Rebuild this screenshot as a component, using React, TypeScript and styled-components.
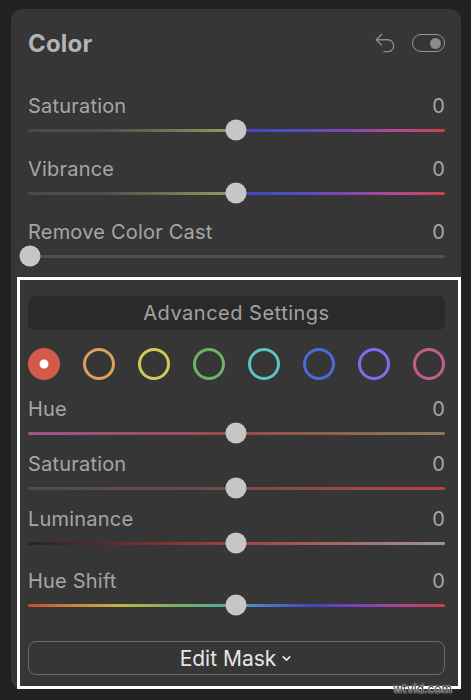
import { FC } from 'react';
import styled, { createGlobalStyle } from 'styled-components';
import { Undo2, ChevronDown } from 'lucide-react';

const GlobalStyle = createGlobalStyle`
	html, body {
		margin: 0;
		padding: 0;
		background: #222222;
		height: 700px;
		overflow: hidden;
	}
	body {
		font-family: Inter, "Noto Sans", "Liberation Sans", sans-serif;
	}
`

interface ISliderProps {
	label: string;
	value: number;
	gradient: string;
	pos: number;
	gapTop?: number;
}

const Slider: FC<ISliderProps> = ({label, value, gradient, pos, gapTop = 0}) => {
	return (
		<SliderRow $gapTop={gapTop}>
			<LabelLine>
				<span>{label}</span>
				<span>{value}</span>
			</LabelLine>
			<TrackArea>
				<Track $gradient={gradient}/>
				<Knob $pos={pos}/>
			</TrackArea>
		</SliderRow>
	);
};

const swatches = ['#d25a4a', '#dca05e', '#cfc95a', '#6cb463', '#5cc2c2', '#4d6ad6', '#8a68ee', '#bf5f8e'];

const colorGradient = 'linear-gradient(to right, #4a4a4a 0%, #4e4e4e 18%, #6e7656 34%, #8d9b5f 48%, #4646c0 52%, #4b4ec6 62%, #8246b2 76%, #b04a94 88%, #c84444 100%)';

const App: FC = () => {
	return (
		<Page>
			<GlobalStyle/>
			<Panel>
				<Header>
					<Title>Color</Title>
					<HeaderIcons>
						<Undo2 size={26} strokeWidth={1.2} color="#8c8c8c"/>
						<Toggle><ToggleDot/></Toggle>
					</HeaderIcons>
				</Header>
				<Rows $gap={15}>
					<Slider label="Saturation" value={0} pos={0.498} gradient={colorGradient}/>
					<Slider label="Vibrance" value={0} pos={0.498} gradient={colorGradient}/>
					<Slider label="Remove Color Cast" value={0} pos={0.005} gradient="#505050"/>
				</Rows>
				<Highlight>
					<AdvancedButton>Advanced Settings</AdvancedButton>
					<SwatchRow>
						{swatches.map((c, i) => (
							<Swatch key={c} $color={c} $active={i === 0}/>
						))}
					</SwatchRow>
					<Rows $gap={7}>
						<Slider
							label="Hue"
							value={0}
							pos={0.498}
							gradient="linear-gradient(to right, #9c5a88 0%, #9a5070 25%, #9a4c4c 50%, #8c6248 72%, #8a7c58 100%)"
						/>
						<Slider
							label="Saturation"
							value={0}
							pos={0.498}
							gradient="linear-gradient(to right, #4e4c4c 0%, #6a4c4a 40%, #9a4a46 75%, #b84242 100%)"
						/>
						<Slider
							label="Luminance"
							value={0}
							pos={0.498}
							gradient="linear-gradient(to right, #2a2222 0%, #6a3030 25%, #a04442 50%, #a06a66 75%, #a09494 100%)"
						/>
						<Slider
							label="Hue Shift"
							value={0}
							pos={0.498}
							gapTop={7}
							gradient="linear-gradient(to right, #c84a34 0%, #c8823a 10%, #c2b244 22%, #76b062 36%, #52a8ac 48%, #4a74c8 58%, #4444c2 68%, #8042c0 80%, #b24292 90%, #c84444 100%)"
						/>
					</Rows>
					<EditMask>
						Edit Mask
						<ChevronDown size={13} strokeWidth={3} color="#e6e6e6"/>
					</EditMask>
				</Highlight>
			</Panel>
			<Watermark>wtvid.com</Watermark>
		</Page>
	);
};

export default App;

const Page = styled.div`
	position: relative;
	width: 471px;
	height: 700px;
	padding-top: 9px;
	box-sizing: border-box;
`

const Panel = styled.div`
	width: 450px;
	margin-left: 11px;
	box-sizing: border-box;
	padding: 0 16px 0 17px;
	background: #363636;
	border-radius: 11px;
`

const Header = styled.div`
	height: 68px;
	display: flex;
	align-items: center;
	justify-content: space-between;
	margin-bottom: 17px;
`

const Title = styled.h1`
	margin: 0;
	font-size: 24px;
	font-weight: 700;
	color: #b4b4b4;
	letter-spacing: 0.2px;
`

const HeaderIcons = styled.div`
	display: flex;
	align-items: center;
	gap: 14px;
`

const Toggle = styled.div`
	width: 33px;
	height: 18px;
	box-sizing: border-box;
	border: 1.5px solid #959595;
	border-radius: 9px;
	display: flex;
	align-items: center;
	justify-content: flex-end;
	padding-right: 3px;
`

const ToggleDot = styled.div`
	width: 11px;
	height: 11px;
	border-radius: 50%;
	background: #8a8a8a;
`

const Rows = styled.div<{ $gap: number }>`
	display: flex;
	flex-direction: column;
	gap: ${p => p.$gap}px;
`

const SliderRow = styled.div<{ $gapTop: number }>`
	display: flex;
	flex-direction: column;
	margin-top: ${p => p.$gapTop}px;
`

const LabelLine = styled.div`
	display: flex;
	justify-content: space-between;
	height: 24px;
	line-height: 24px;
	font-size: 20px;
	letter-spacing: 0.2px;
	color: #a6a6a6;
`

const TrackArea = styled.div`
	position: relative;
	height: 24px;
	display: flex;
	align-items: center;
`

const Track = styled.div<{ $gradient: string }>`
	width: 100%;
	height: 3px;
	border-radius: 2px;
	background: ${p => p.$gradient};
`

const Knob = styled.div<{ $pos: number }>`
	position: absolute;
	top: 50%;
	left: ${p => p.$pos * 100}%;
	width: 21px;
	height: 21px;
	border-radius: 50%;
	background: #c6c6c6;
	transform: translate(-50%, -50%);
`

const Highlight = styled.div`
	margin: 9px -16px 0 -11px;
	border: 3px solid #ffffff;
	padding: 16px 13px 11px 8px;
	display: flex;
	flex-direction: column;
`

const AdvancedButton = styled.div`
	height: 34px;
	border-radius: 7px;
	background: #2a2a2a;
	color: #a2a2a2;
	font-size: 20px;
	display: flex;
	align-items: center;
	justify-content: center;
	letter-spacing: 0.5px;
`

const SwatchRow = styled.div`
	display: flex;
	justify-content: space-between;
	margin: 18px 0 17px;
`

const Swatch = styled.div<{ $color: string; $active: boolean }>`
	position: relative;
	width: 32px;
	height: 32px;
	box-sizing: border-box;
	border-radius: 50%;
	border: 3px solid ${p => p.$color};
	background: ${p => (p.$active ? p.$color : 'transparent')};

	&::after {
		content: '';
		display: ${p => (p.$active ? 'block' : 'none')};
		position: absolute;
		top: 50%;
		left: 50%;
		width: 9px;
		height: 9px;
		border-radius: 50%;
		background: #ffffff;
		transform: translate(-50%, -50%);
	}
`

const EditMask = styled.div`
	margin-top: 24px;
	height: 34px;
	box-sizing: border-box;
	border: 1.5px solid #6c6c6c;
	border-radius: 8px;
	display: flex;
	align-items: center;
	justify-content: center;
	gap: 4px;
	font-size: 21px;
	color: #e6e6e6;
`

const Watermark = styled.div`
	position: absolute;
	right: 19px;
	bottom: 4px;
	font-size: 12px;
	color: #3a3a3a;
	text-shadow: 0 0 2px #ffffff, 0 0 1px #ffffff;
`
